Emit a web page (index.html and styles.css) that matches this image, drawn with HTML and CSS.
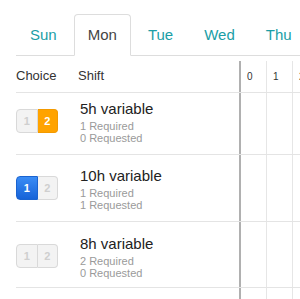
FILE: index.html
```html
<!DOCTYPE html>
<html>
<head>
<meta charset="utf-8">
<link rel="stylesheet" href="styles.css">
</head>
<body>
<ul class="tabs">
  <li class="tab">Sun</li>
  <li class="tab active">Mon</li>
  <li class="tab">Tue</li>
  <li class="tab">Wed</li>
  <li class="tab">Thu</li>
  <li class="tab">Fri</li>
</ul>
<div class="grid">
  <div class="row head">
    <div class="left">
      <div class="choice">Choice</div>
      <div class="shift">Shift</div>
    </div>
    <div class="timeline">
      <div class="cell">0</div><div class="cell">1</div><div class="cell">2</div>
    </div>
  </div>
  <div class="row r1">
    <div class="left">
      <div class="choice">
        <div class="toggle"><span class="seg">1</span><span class="seg orange">2</span></div>
      </div>
      <div class="shift">
        <div class="title">5h variable</div>
        <div class="sub">1 Required</div>
        <div class="sub">0 Requested</div>
      </div>
    </div>
    <div class="timeline"><div class="cell"></div><div class="cell"></div><div class="cell"></div></div>
  </div>
  <div class="row r2">
    <div class="left">
      <div class="choice">
        <div class="toggle"><span class="seg blue">1</span><span class="seg">2</span></div>
      </div>
      <div class="shift">
        <div class="title">10h variable</div>
        <div class="sub">1 Required</div>
        <div class="sub">1 Requested</div>
      </div>
    </div>
    <div class="timeline"><div class="cell"></div><div class="cell"></div><div class="cell"></div></div>
  </div>
  <div class="row r3">
    <div class="left">
      <div class="choice">
        <div class="toggle"><span class="seg">1</span><span class="seg">2</span></div>
      </div>
      <div class="shift">
        <div class="title">8h variable</div>
        <div class="sub">2 Required</div>
        <div class="sub">0 Requested</div>
      </div>
    </div>
    <div class="timeline"><div class="cell"></div><div class="cell"></div><div class="cell"></div></div>
  </div>
  <div class="row r4">
    <div class="left"></div>
    <div class="timeline"><div class="cell"></div><div class="cell"></div><div class="cell"></div></div>
  </div>
</div>
</body>
</html>
```
FILE: styles.css
```css
html, body {
  margin: 0;
  padding: 0;
  overflow: hidden;
  background: #fff;
}
body {
  width: 300px;
  height: 299px;
  font-family: "Liberation Sans", Arial, Helvetica, sans-serif;
  color: #333;
}
.tabs {
  list-style: none;
  display: flex;
  margin: 14px 0 0 16px;
  padding: 0;
  border-bottom: 1px solid #ddd;
  white-space: nowrap;
  width: 400px;
}
.tab {
  flex: none;
  padding: 10px 13px;
  line-height: 20px;
  font-size: 15px;
  color: #1a9ea6;
  margin-right: 3px;
  margin-bottom: -1px;
  border: 1px solid transparent;
  border-radius: 4px 4px 0 0;
}
.tab.active {
  color: #444;
  background: #fff;
  border-color: #ddd;
  border-bottom-color: #fff;
}
.grid {
  margin-left: 16px;
  width: 340px;
}
.row {
  display: flex;
  border-bottom: 1px solid #e4e4e4;
}
.left {
  width: 223px;
  flex: none;
  display: flex;
  align-items: center;
}
.head { height: 36px; }
.r1 { height: 61px; }
.r2 { height: 66px; }
.r3 { height: 65px; }
.r4 { height: 20px; border-bottom: none; }
.r1 .left { padding-bottom: 6px; box-sizing: border-box; }
.r3 .left { padding-top: 3px; box-sizing: border-box; }
.choice {
  width: 62px;
  flex: none;
}
.head .choice, .head .shift {
  font-size: 13px;
  color: #333;
  padding-top: 2px;
}
.r1 .shift, .r2 .shift, .r3 .shift { padding-left: 2px; }
.timeline {
  display: flex;
  border-left: 2px solid #b0b0b0;
}
.head .timeline { margin-top: 5px; }
.cell {
  width: 25px;
  border-right: 1px solid #e6e6e6;
  font-size: 10px;
  color: #333;
  padding-left: 6px;
  box-sizing: border-box;
  width: 26px;
  display: flex;
  align-items: center;
}
.title {
  font-size: 15px;
  line-height: 21px;
  color: #222;
}
.sub {
  font-size: 11px;
  line-height: 12px;
  color: #9a9a9a;
}
.title + .sub { margin-top: 1px; }
.toggle {
  display: flex;
  width: 42px;
  height: 24px;
}
.seg {
  flex: 1;
  display: flex;
  align-items: center;
  justify-content: center;
  font-size: 11px;
  font-weight: bold;
  color: #cfcfcf;
  background: #f3f3f3;
  border: 1px solid #d9d9d9;
}
.seg:first-child {
  border-radius: 4px 0 0 4px;
}
.seg + .seg {
  border-left: none;
  border-radius: 0 4px 4px 0;
}
.seg.orange {
  background: #ffa300;
  border-color: #f39a00;
  color: #fff;
}
.seg.blue {
  background: linear-gradient(#3a8cf5, #1663d8);
  border-color: #1a63d0;
  color: #fff;
}
```
